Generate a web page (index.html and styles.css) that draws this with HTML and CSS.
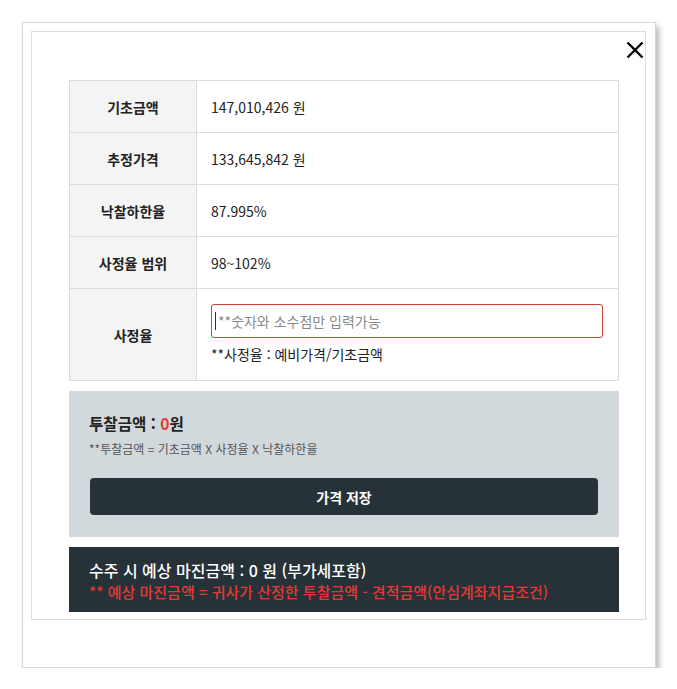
FILE: index.html
```html
<!DOCTYPE html>
<html lang="ko">
<head>
<meta charset="utf-8">
<title>가격 입력</title>
<link rel="stylesheet" href="styles.css">
</head>
<body>
<div class="modal">
  <div class="inner">
    <button class="close" aria-label="닫기">
      <svg viewBox="0 0 18 18" width="18" height="18"><path d="M1.5 1.5 L16.5 16.5 M16.5 1.5 L1.5 16.5" stroke="#000" stroke-width="2.4" fill="none"/></svg>
    </button>
    <table class="info">
      <tr><th>기초금액</th><td>147,010,426 원</td></tr>
      <tr><th>추정가격</th><td>133,645,842 원</td></tr>
      <tr><th>낙찰하한율</th><td>87.995%</td></tr>
      <tr><th>사정율 범위</th><td>98~102%</td></tr>
      <tr class="rate-row"><th>사정율</th><td>
        <div class="input-box"><span class="caret"></span><span class="ph">**숫자와 소수점만 입력가능</span></div>
        <p class="help">**사정율 : 예비가격/기초금액</p>
      </td></tr>
    </table>
    <div class="bid-box">
      <div class="bid-title">투찰금액 : <span class="red">0</span>원</div>
      <div class="bid-note">**투찰금액 = 기초금액 X 사정율 X 낙찰하한율</div>
      <button class="save">가격 저장</button>
    </div>
    <div class="margin-box">
      <div class="margin-title">수주 시 예상 마진금액 : 0 원 (부가세포함)</div>
      <div class="margin-note">** 예상 마진금액 = 귀사가 산정한 투찰금액 - 견적금액(안심계좌지급조건)</div>
    </div>
  </div>
</div>
</body>
</html>
```

FILE: styles.css
```css
* { box-sizing: border-box; }
html, body { margin: 0; padding: 0; background: #fff; }
body {
  font-family: "Noto Sans CJK KR", "Noto Sans", sans-serif;
  color: #222;
}
.modal {
  margin: 22px 0 0 22px;
  width: 634px;
  height: 646px;
  border: 1px solid #d8d8d8;
  background: #fff;
  box-shadow: 3px 4px 6px rgba(0,0,0,0.28);
  padding: 8px 9px 47px 8px;
}
.inner {
  position: relative;
  height: 589px;
  border: 1px solid #dcdcdc;
  padding: 48px 25px 0 37px;
  overflow: hidden;
}
.close {
  position: absolute;
  top: 9px;
  right: 1px;
  border: 0;
  background: none;
  padding: 0;
  width: 18px;
  height: 18px;
  cursor: pointer;
}
.close svg { display: block; }
.info {
  width: 550px;
  border-collapse: collapse;
  font-size: 14px;
}
.info th, .info td {
  border: 1px solid #dcdcdc;
  height: 52px;
  padding: 0 15px 0 14px;
}
.info th {
  width: 127px;
  background: #f4f4f4;
  font-weight: 700;
  text-align: center;
  padding: 0;
}
.info td { font-weight: 400; }
.rate-row th, .rate-row td { height: 92px; }
.input-box {
  height: 34px;
  border: 1px solid #c8463a;
  border-radius: 3px;
  display: flex;
  align-items: center;
  padding-left: 3px;
  background: #fff;
}
.caret {
  width: 1px;
  height: 18px;
  background: #333;
  margin-right: 2px;
}
.ph { color: #8a8a8a; font-size: 14px; }
.help { margin: 5px 0 0 0; font-size: 14px; line-height: 22px; }
.bid-box {
  margin-top: 10px;
  width: 550px;
  height: 146px;
  background: #d2d9dc;
  padding: 20px 21px 0 20px;
}
.bid-title { font-size: 15.6px; font-weight: 700; line-height: 24px; }
.red { color: #ec3a2c; }
.bid-note { font-size: 12px; color: #555; margin-top: 6px; line-height: 16px; }
.save {
  display: block;
  width: 508px;
  height: 37px;
  margin: 21px 0 0 1px;
  border: 0;
  border-radius: 4px;
  background: #263238;
  color: #fff;
  font-family: inherit;
  font-size: 14px;
  font-weight: 700;
}
.margin-box {
  margin-top: 10px;
  width: 550px;
  height: 65px;
  background: #263238;
  padding: 12px 20px 0 20px;
}
.margin-title { color: #fff; font-size: 16px; font-weight: 500; line-height: 22px; }
.margin-note { color: #e53935; font-size: 15px; font-weight: 500; line-height: 22px; }
```
